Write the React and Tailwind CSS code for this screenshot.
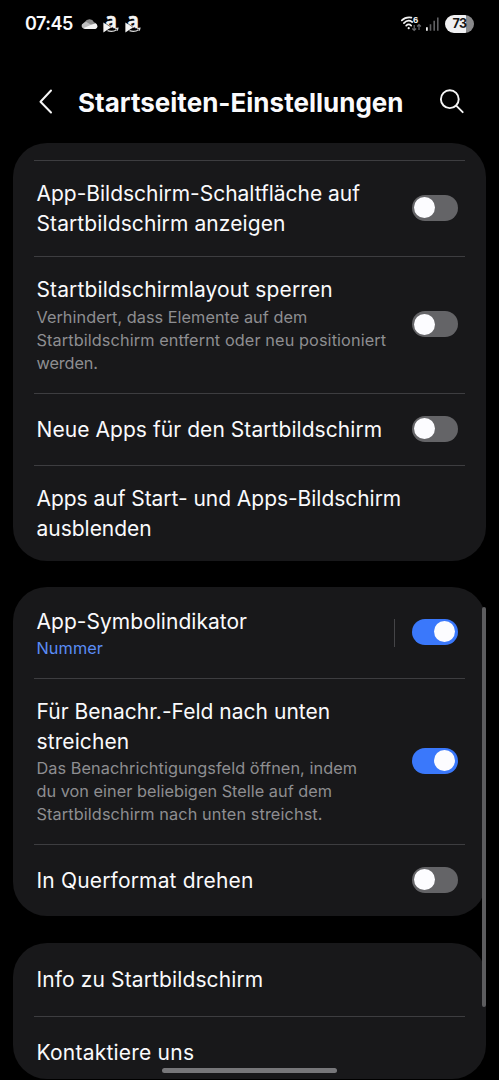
import React from "react";

function Toggle({ on }) {
  return (
    <span
      role="switch"
      aria-checked={!!on}
      className={
        "mb-[2px] flex h-[26px] w-[46px] shrink-0 items-center rounded-full " +
        (on ? "justify-end bg-[#3a78fb] pr-[2.5px]" : "justify-start bg-[#646467] pl-[2.5px]")
      }
    >
      <span className="size-[21px] rounded-full bg-[#fcfcff]" />
    </span>
  );
}

function Line({ children, track = "" }) {
  return (
    <div className="whitespace-nowrap">
      <span className={track}>{children}</span>
    </div>
  );
}

function Title({ children }) {
  return <div className="text-[21px] leading-[29.7px] text-[#fafafc]">{children}</div>;
}

function Sub({ children, blue }) {
  return (
    <div className={"text-[16.3px] leading-[23px] " + (blue ? "text-[#5b8df5]" : "text-[#8e8e91]")}>
      {children}
    </div>
  );
}

function Row({ size, children, toggle, divided, textClass = "" }) {
  return (
    <div className={"flex items-center justify-between pl-[23.5px] pr-[28.5px] " + size}>
      <div className={textClass}>{children}</div>
      {toggle && (
        <div className="flex items-center gap-[17px]">
          {divided && <span className="h-7 w-px bg-[#444447]" />}
          <Toggle on={toggle === "on"} />
        </div>
      )}
    </div>
  );
}

function Divider() {
  return <div className="ml-[21px] mr-[21px] h-px bg-[#3d3d40]" />;
}

function Card({ size, children }) {
  return <section className={"mx-[13px] rounded-[34px] bg-[#18181a] " + size}>{children}</section>;
}

function ShopIcon() {
  return (
    <svg width="17" height="22" viewBox="0 0 17 22" fill="none" className="overflow-visible">
      <text x="2" y="15" fontSize="22" fontWeight="700" fill="#f5f5f5" stroke="#f5f5f5" strokeWidth=".4" textLength="12" lengthAdjust="spacingAndGlyphs" className="font-['Open_Sans',sans-serif]">a</text>
      <path d="M.4 9.4v10.2l7.4-5.2Z" fill="#f5f5f5" />
      <path d="M1 9.2 8 14.3" stroke="#000" strokeWidth=".5" />
      <path d="M4.5 17.6c3.2 1.1 6.6.8 9.2-.9M12.2 15.6l2.7-.4-.6 2.4" stroke="#ddd" strokeWidth="1.2" />
    </svg>
  );
}

function StatusBar() {
  return (
    <div className="flex h-[47px] items-center justify-between pl-[25px] pr-[25px]">
      <div className="flex items-center">
        <span className="w-[56px] whitespace-nowrap text-[18px] font-semibold leading-6 tracking-[-0.5px]">07:45</span>
        <svg width="17" height="12" viewBox="0 0 17 12" className="mr-[5px]">
          <path d="M4 11a4 4 0 0 1 0-7.2A5 5 0 0 1 13 4.2 3.5 3.5 0 0 1 13.5 11Z" fill="#8c8c8c" />
          <path d="M1 6.2 5 3.8l6 3.5-8 3.3C.8 10.2.1 8 1 6.2Z" fill="#bdbdbd" />
          <path d="M2.2 10.3 10.7 6.6 14.4 5.4c2.7.8 2.8 5.2-.5 5.7H4.3Z" fill="#f2f2f2" />
        </svg>
        <div className="flex gap-[5px]"><ShopIcon /><ShopIcon /></div>
      </div>
      <div className="flex items-center">
        <svg width="39" height="18" viewBox="0 0 39 18" fill="none" className="overflow-visible">
          <g stroke="#f2f2f2" strokeWidth="1.7" strokeLinecap="round">
            <path d="M1.8 5.4C4.4 2.9 8 2 11.4 2.6" />
            <path d="M3.9 8.1c2.3-2.4 5.7-2.9 8.3-1.1" />
            <path d="M6.2 10.6c1.5-1.4 3.5-1.4 5 0" />
          </g>
          <circle cx="8.7" cy="13.2" r="1.1" fill="#f2f2f2" />
          <text x="13" y="8.2" fontSize="9.5" fontWeight="700" fill="#f2f2f2" className="font-['Liberation_Sans',sans-serif]">6</text>
          <path d="M14.2 10v5.3m-1.9-1.8 1.9 2 1.9-2M19 15v-5.3m-1.9 1.8 1.9-2 1.9 2" stroke="#68686b" strokeWidth="1.2" />
          <path d="M26.9 12.2v3.6" stroke="#f2f2f2" strokeWidth="1.8" />
          <path d="M30.5 9.2v6.6M34.2 5.7v10.1M37.8 2.5v13.3" stroke="#606063" strokeWidth="1.6" />
        </svg>
        <div className="ml-[6px] flex h-[18px] w-[29px] items-center justify-center rounded-full bg-linear-to-r from-[#f0f0f2] from-73% to-[#89898b] to-73% pt-px text-[12.5px] font-bold leading-none tracking-[-0.5px] text-[#151515]">73</div>
      </div>
    </div>
  );
}

export default function App() {
  return (
    <main className="relative h-[1080px] w-[499px] overflow-hidden bg-black font-['Inter',sans-serif] text-[#fafafc]">
      <StatusBar />
      <header className="flex h-24 items-start pl-[38px] pr-[34px] pt-[39px]">
        <svg width="15" height="30" viewBox="0 0 15 30" fill="none" stroke="#f5f5f5" strokeWidth="2" strokeLinecap="round" strokeLinejoin="round" className="shrink-0">
          <path d="M13 4.5 2.5 15.7 13 26.5" />
        </svg>
        <h1 className="ml-[25px] flex-1 whitespace-nowrap text-[26px] font-bold leading-[33px]">
          <span className="tracking-[0.01px]">Startseiten-Einstellungen</span>
        </h1>
        <svg width="26" height="30" viewBox="0 0 26 30" fill="none" stroke="#f5f5f5" strokeWidth="1.9" strokeLinecap="round" className="shrink-0">
          <circle cx="10.8" cy="13.2" r="8.9" />
          <path d="m17.2 19.7 6.5 6.5" />
        </svg>
      </header>

      <Card size="h-[418px]">
        <div className="h-[17px]" />
        <Divider />
        <Row size="h-[95px]" toggle="off" textClass="pt-px">
          <Title>
            <Line track="tracking-[-0.02px]">App-Bildschirm-Schaltfläche auf</Line>
            <Line track="tracking-[0.1px]">Startbildschirm anzeigen</Line>
          </Title>
        </Row>
        <Divider />
        <Row size="h-[136px]" toggle="off">
          <Title><Line track="tracking-[0.12px]">Startbildschirmlayout sperren</Line></Title>
          <div className="pt-px">
            <Sub>
              <Line track="tracking-[0.03px]">Verhindert, dass Elemente auf dem</Line>
              <Line track="tracking-[0.09px]">Startbildschirm entfernt oder neu positioniert</Line>
              <Line track="tracking-[-0.1px]">werden.</Line>
            </Sub>
          </div>
        </Row>
        <Divider />
        <Row size="h-[71px]" toggle="off">
          <Title><Line track="tracking-[0.06px]">Neue Apps für den Startbildschirm</Line></Title>
        </Row>
        <Divider />
        <Row size="h-[95px]" textClass="pt-px">
          <Title>
            <Line track="tracking-[-0.04px]">Apps auf Start- und Apps-Bildschirm</Line>
            <Line track="tracking-[-0.02px]">ausblenden</Line>
          </Title>
        </Row>
      </Card>

      <Card size="mt-[26px] h-[329px]">
        <Row size="h-[91px]" toggle="on" divided textClass="pt-[2px]">
          <Title><Line track="tracking-[0.03px]">App-Symbolindikator</Line></Title>
          <Sub blue><Line track="tracking-[0.08px]">Nummer</Line></Sub>
        </Row>
        <Divider />
        <Row size="h-[165px]" toggle="on">
          <Title>
            <Line track="tracking-[0.02px]">Für Benachr.-Feld nach unten</Line>
            <Line track="tracking-[0.1px]">streichen</Line>
          </Title>
          <Sub>
            <Line track="tracking-[0.06px]">Das Benachrichtigungsfeld öffnen, indem</Line>
            <Line track="tracking-[0.02px]">du von einer beliebigen Stelle auf dem</Line>
            <Line track="tracking-[0.1px]">Startbildschirm nach unten streichst.</Line>
          </Sub>
        </Row>
        <Divider />
        <Row size="h-[71px]" toggle="off" textClass="pt-px">
          <Title><Line track="tracking-[0.17px]">In Querformat drehen</Line></Title>
        </Row>
      </Card>

      <Card size="mt-[27px] h-[136px]">
        <Row size="h-[73px]" textClass="pt-px">
          <Title><Line track="tracking-[0.12px]">Info zu Startbildschirm</Line></Title>
        </Row>
        <Divider />
        <Row size="h-[71px]" textClass="pt-px">
          <Title><Line track="tracking-[0.22px]">Kontaktiere uns</Line></Title>
        </Row>
      </Card>

      <div className="absolute left-[482px] top-[607px] h-[400px] w-1 rounded-full bg-[#5d5d5f]" />
      <div className="absolute left-[162px] top-[1068px] h-[5px] w-[175px] rounded-full bg-[#77777a]" />
    </main>
  );
}
